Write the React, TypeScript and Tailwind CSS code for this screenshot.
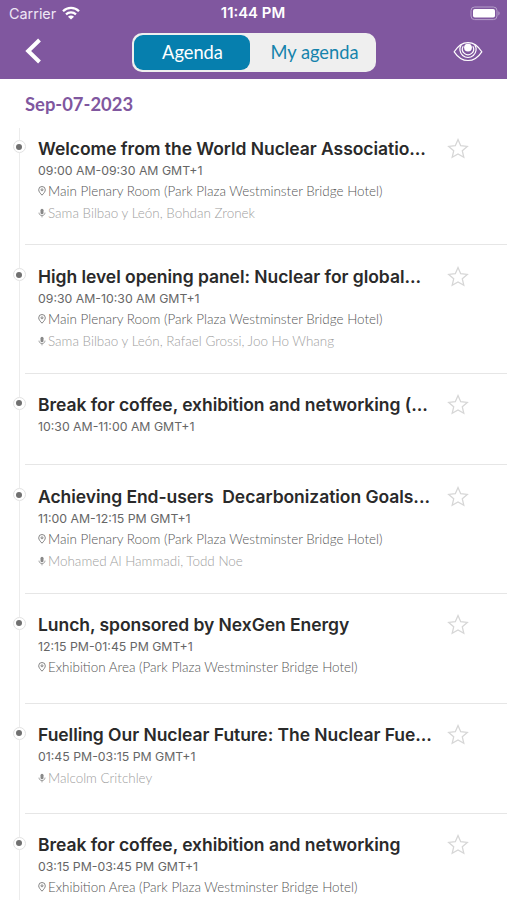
import clsx from "clsx";

type Session = {
  title: string;
  time: string;
  place?: string;
  speakers?: string;
  height: string;
};

const sessions: Session[] = [
  {
    title: "Welcome from the World Nuclear Associatio...",
    time: "09:00 AM-09:30 AM GMT+1",
    place: "Main Plenary Room (Park Plaza Westminster Bridge Hotel)",
    speakers: "Sama Bilbao y León, Bohdan Zronek",
    height: "h-[128.4px]",
  },
  {
    title: "High level opening panel: Nuclear for global...",
    time: "09:30 AM-10:30 AM GMT+1",
    place: "Main Plenary Room (Park Plaza Westminster Bridge Hotel)",
    speakers: "Sama Bilbao y León, Rafael Grossi, Joo Ho Whang",
    height: "h-[128.4px]",
  },
  {
    title: "Break for coffee, exhibition and networking (...",
    time: "10:30 AM-11:00 AM GMT+1",
    height: "h-[91.4px]",
  },
  {
    title: "Achieving End-users  Decarbonization Goals...",
    time: "11:00 AM-12:15 PM GMT+1",
    place: "Main Plenary Room (Park Plaza Westminster Bridge Hotel)",
    speakers: "Mohamed Al Hammadi, Todd Noe",
    height: "h-[128.4px]",
  },
  {
    title: "Lunch, sponsored by NexGen Energy",
    time: "12:15 PM-01:45 PM GMT+1",
    place: "Exhibition Area (Park Plaza Westminster Bridge Hotel)",
    height: "h-[110px]",
  },
  {
    title: "Fuelling Our Nuclear Future: The Nuclear Fue...",
    time: "01:45 PM-03:15 PM GMT+1",
    speakers: "Malcolm Critchley",
    height: "h-[110px]",
  },
  {
    title: "Break for coffee, exhibition and networking",
    time: "03:15 PM-03:45 PM GMT+1",
    place: "Exhibition Area (Park Plaza Westminster Bridge Hotel)",
    height: "h-[110px]",
  },
];

function WifiIcon() {
  return (
    <svg viewBox="0 0 18 14" className="h-[14px] w-[18px]" fill="none" stroke="white">
      <path d="M1 5.2a11.4 11.4 0 0 1 16 0" strokeWidth="2.3" />
      <path d="M4 8.4a7.2 7.2 0 0 1 10 0" strokeWidth="2.2" />
      <path d="M9 13.6 6 10.8a4.2 4.2 0 0 1 6 0z" fill="white" stroke="none" />
    </svg>
  );
}

function BatteryIcon() {
  return (
    <svg viewBox="0 0 31 15" className="h-[15px] w-[31px]" fill="none">
      <rect x="1" y="1" width="26" height="12.6" rx="3.6" stroke="#b69fca" />
      <rect x="3" y="3" width="22" height="8.6" rx="1.8" fill="white" />
      <path d="M28.4 5.2c1.6.6 1.6 3.6 0 4.2z" fill="#b69fca" />
    </svg>
  );
}

function EyeIcon() {
  return (
    <svg viewBox="0 0 30 22" className="h-[22px] w-[30px]" fill="none" stroke="white" strokeWidth="1.2">
      <path d="M1.2 11.8C5 5.7 9.5 2.6 15 2.6s10 3.1 13.8 9.200C25 17.600 20.500 20.500 15 20.500S5 17.600 1.200 11.800z" />
      <path d="M8.200 5a8.100 8.100 0 1 0 13.600 0" />
      <path d="M10.200 6.200a5.600 5.600 0 1 0 9.600 0" />
      <circle cx="15" cy="7.600" r="3.900" fill="white" stroke="none" />
    </svg>
  );
}

function PinIcon() {
  return (
    <svg viewBox="0 0 8 10" className="h-[10px] w-[8px] shrink-0" fill="none" stroke="#777" strokeWidth="0.9">
      <path d="M4 9.200C2.200 7.300.7 5.500.7 3.800a3.300 3.300 0 0 1 6.600 0C7.300 5.500 5.800 7.300 4 9.200z" />
      <circle cx="4" cy="3.800" r="1" />
    </svg>
  );
}

function MicIcon() {
  return (
    <svg viewBox="0 0 8 10" className="h-[10px] w-[8px] shrink-0" fill="none" stroke="#999" strokeWidth="0.9">
      <rect x="2.500" y="0.800" width="3" height="5.400" rx="1.500" fill="#888" stroke="none" />
      <path d="M1 4.600c0 4 6 4 6 0M4 7.600v1.800" />
    </svg>
  );
}

function StarIcon() {
  return (
    <svg viewBox="0 0 22 21" className="h-[21px] w-[22px]" fill="none" stroke="#d6d6d6" strokeWidth="1.300">
      <path d="M11 1.600l2.700 6.100 6.600.7-5 4.400 1.500 6.500L11 16l-5.800 3.300 1.500-6.500-5-4.400 6.600-.7z" />
    </svg>
  );
}

function SessionRow({ session, first }: { session: Session; first: boolean }) {
  return (
    <li className={clsx("flex shrink-0", session.height)}>
      <div className="flex w-[25px] shrink-0 flex-col items-center pl-[13px]">
        <div className={clsx("w-px bg-[#ececec]", first ? "mt-[11px] h-[12px]" : "h-[23px]")} />
        <div className="flex size-[13px] shrink-0 items-center justify-center rounded-full border border-[#e2e2e2]">
          <div className="size-[6px] rounded-full bg-[#707070]" />
        </div>
        <div className="w-px grow bg-[#ececec]" />
      </div>
      <div className="flex grow border-b border-[#e6e6e6] pt-[19.6px] pl-[13px]">
        <div className="w-[409px] whitespace-pre">
          <h2 className="h-[24px] font-['Inter',sans-serif] text-[17.5px] leading-[24px] font-semibold tracking-[-0.05px] text-[#2a2a2a]">
            {session.title}
          </h2>
          <p className="h-[19px] font-['Inter',sans-serif] text-[12.3px] leading-[19px] text-[#666]">
            {session.time}
          </p>
          {session.place && (
            <p className="flex h-[22px] items-center gap-[2px] font-['Lato',sans-serif] text-[13.45px] font-light text-[#555]">
              <PinIcon />
              {session.place}
            </p>
          )}
          {session.speakers && (
            <p className="flex h-[23px] items-center gap-[2px] font-['Lato',sans-serif] text-[13.45px] font-light text-[#a0a0a0]">
              <MicIcon />
              {session.speakers}
            </p>
          )}
        </div>
        <button className="mt-px h-[21px]" aria-label="Add to my agenda">
          <StarIcon />
        </button>
      </div>
    </li>
  );
}

export default function App() {
  return (
    <div className="flex h-[900px] w-[507px] flex-col overflow-hidden bg-white">
      <header className="flex h-[79px] shrink-0 flex-col bg-[#80579f] text-white">
        <div className="grid h-[27px] grid-cols-3 items-center pr-[6px] pl-[9px] font-['Inter',sans-serif] text-[14.4px]">
          <div className="flex items-center gap-[6px] text-[#eee6f5]">
            <span>Carrier</span>
            <WifiIcon />
          </div>
          <span className="-ml-[4px] text-center text-[14.9px] font-semibold">11:44 PM</span>
          <div className="flex justify-end">
            <BatteryIcon />
          </div>
        </div>
        <div className="flex items-start pt-[6px]">
          <button className="mt-[5px] ml-[25px] w-[107px]" aria-label="Back">
            <svg viewBox="0 0 17 26" className="h-[26px] w-[17px]" fill="none" stroke="white" strokeWidth="4">
              <path d="M14.500 2 3.200 13l11.300 11" />
            </svg>
          </button>
          <div className="flex h-[39px] w-[244px] rounded-[10px] bg-[#efefef] p-[2px] font-['Lato',sans-serif] text-[18.3px]">
            <button className="w-[116px] rounded-[9px] bg-[#067fae] pl-[1px] text-white">Agenda</button>
            <button className="grow pl-[5px] text-[#1583ac]">My agenda</button>
          </div>
          <button className="mt-[7px] ml-[77px]" aria-label="Preview">
            <EyeIcon />
          </button>
        </div>
      </header>
      <h1 className="h-[38px] shrink-0 pt-[12px] pl-[25px] font-['Lato',sans-serif] text-[18.4px] leading-[26px] font-bold text-[#80579f]">
        Sep-07-2023
      </h1>
      <ul className="flex flex-col">
        {sessions.map((session, index) => (
          <SessionRow key={session.time} session={session} first={index === 0} />
        ))}
      </ul>
    </div>
  );
}
